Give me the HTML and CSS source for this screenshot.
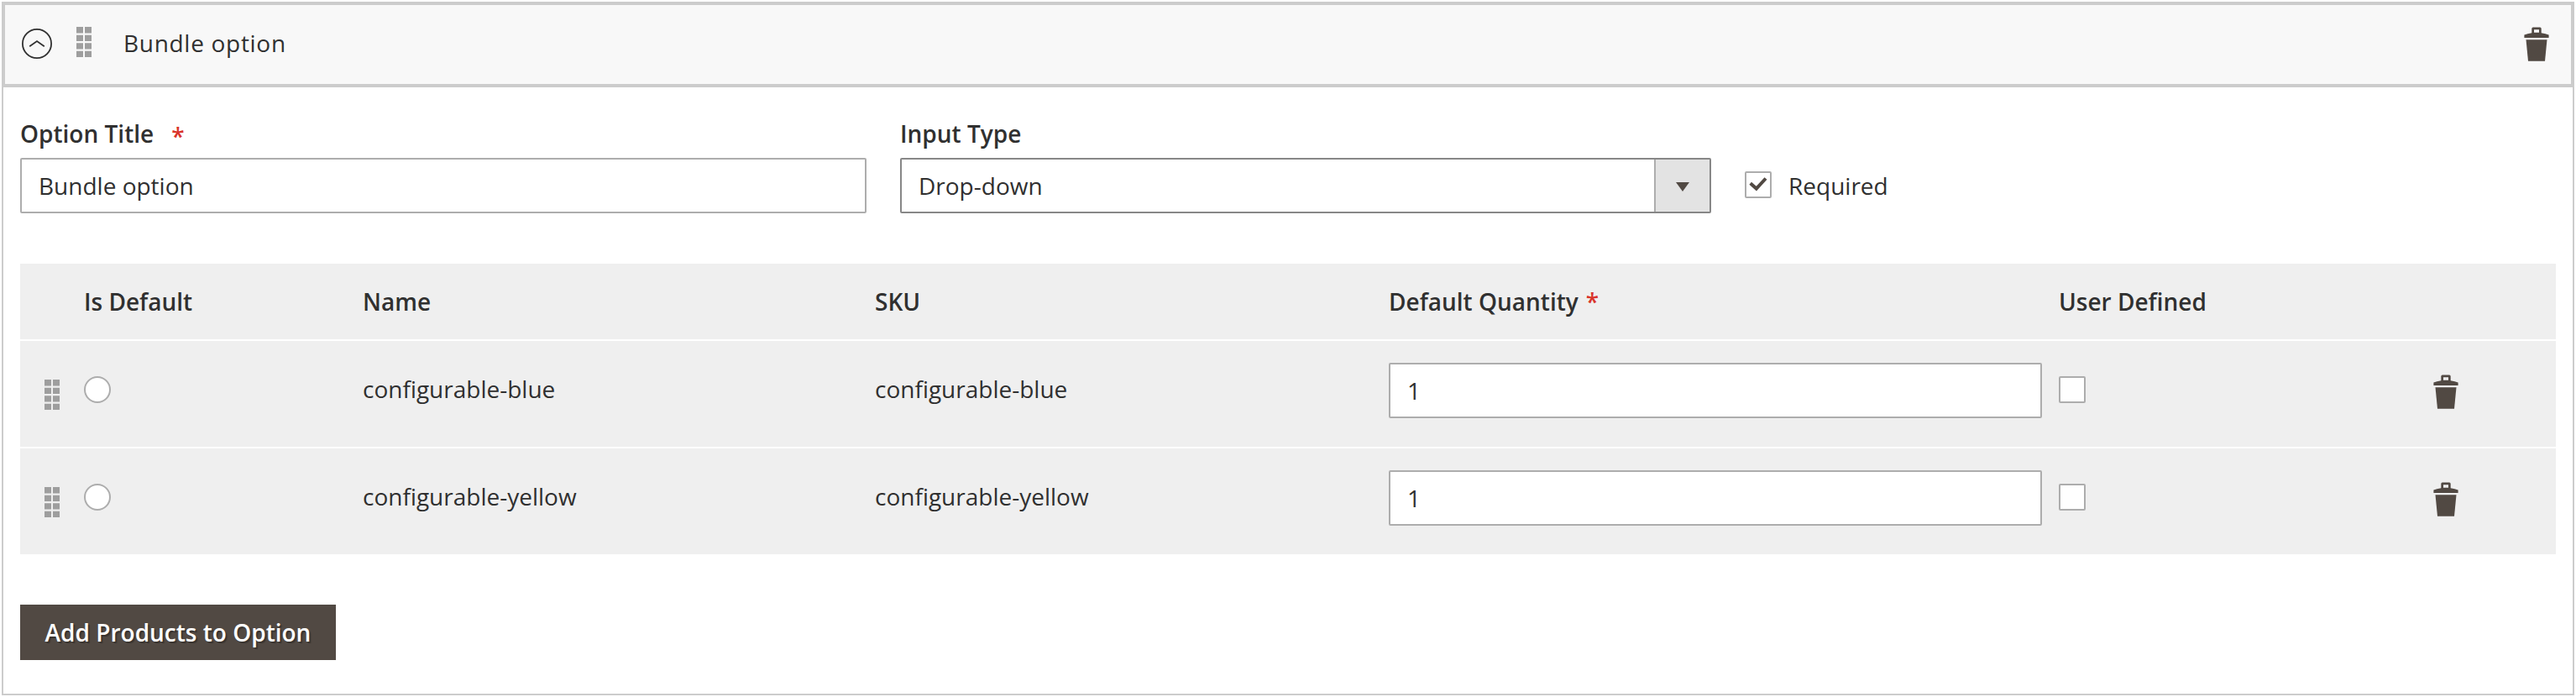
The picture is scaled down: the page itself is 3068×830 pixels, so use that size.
FILE: index.html
```html
<!DOCTYPE html>
<html lang="en">
<head>
<meta charset="utf-8">
<title>Bundle option</title>
<link rel="stylesheet" href="styles.css">
</head>
<body>
<svg class="sprite" aria-hidden="true">
  <symbol id="trash" viewBox="0 0 30 42">
    <path fill-rule="evenodd" d="M9.3 7.2V2.2Q9.300.6 10.900.6H19.100Q20.700.6 20.700 2.2V7.200Q26 8 29.600 9.400V13.100H.4V9.400Q4 8 9.300 7.200ZM12 3.300V6.800H18V3.300Z"/>
    <path d="M2.500 15.200H27.500L25 40.800H5Z"/>
  </symbol>
  <symbol id="grip" viewBox="0 0 18 37">
    <path d="M0 0h8v7.600h-8zM10 0h8v7.600h-8zM0 9.700h8v7.300h-8zM10 9.700h8v7.300h-8zM0 19.200h8v7.300h-8zM10 19.200h8v7.300h-8zM0 28.800h8v7.300h-8zM10 28.800h8v7.300h-8z"/>
  </symbol>
</svg>
<section class="panel">
  <header class="panel-head">
    <svg class="collapse" viewBox="0 0 36 36"><circle cx="18" cy="18" r="17.100"/><path d="M9.200 21.300L18 15L26.800 21.300"/></svg>
    <svg class="grip"><use href="#grip"/></svg>
    <span class="panel-title">Bundle option</span>
    <svg class="trash"><use href="#trash"/></svg>
  </header>
  <div class="panel-body">
    <div class="fields">
      <div class="field field-title">
        <label class="label">Option Title<span class="star">*</span></label>
        <div class="input">Bundle option</div>
      </div>
      <div class="field field-type">
        <label class="label">Input Type</label>
        <div class="select"><span class="select-value">Drop-down</span><span class="select-arrow"><svg class="caret" viewBox="0 0 16 11"><path d="M0 0H16L8 11Z"/></svg></span></div>
      </div>
      <div class="required">
        <span class="check"><svg class="tick" viewBox="0 0 28 28"><path d="M4.700 12.300L11.800 18.600L23 6.500"/></svg></span>
        <span>Required</span>
      </div>
    </div>
    <div class="table">
      <div class="row row-head">
        <span></span><span>Is Default</span><span>Name</span><span>SKU</span><span>Default Quantity<span class="star-head">*</span></span><span>User Defined</span><span></span>
      </div>
      <div class="row">
        <svg class="grip"><use href="#grip"/></svg>
        <span class="radio"></span>
        <span class="text">configurable-blue</span>
        <span class="text">configurable-blue</span>
        <div class="input qty">1</div>
        <span class="check"></span>
        <svg class="trash"><use href="#trash"/></svg>
      </div>
      <div class="row">
        <svg class="grip"><use href="#grip"/></svg>
        <span class="radio"></span>
        <span class="text">configurable-yellow</span>
        <span class="text">configurable-yellow</span>
        <div class="input qty">1</div>
        <span class="check"></span>
        <svg class="trash"><use href="#trash"/></svg>
      </div>
    </div>
    <button class="button" type="button">Add Products to Option</button>
  </div>
</section>
</body>
</html>
```
FILE: styles.css
```css
* { box-sizing: border-box; }
body {
  margin: 0;
  padding: 2px;
  background: #fff;
  color: #303030;
  font: 400 28px/40px "Open Sans", "Noto Sans", sans-serif;
}
svg { display: block; flex: none; }
.sprite { display: none; }
.panel {
  height: 826px;
  border: 2px solid #ccc;
  border-top: 0;
}
.panel-head {
  display: flex;
  align-items: flex-start;
  height: 102px;
  margin: 0 -2px;
  padding: 28px 26px 0 20px;
  border: 4px solid #ccc;
  background: #f8f8f8;
}
.collapse {
  width: 36px;
  height: 36px;
  fill: none;
  stroke: #303030;
  stroke-width: 1.8;
}
.grip { width: 18px; height: 37px; fill: #9e9e9e; }
.panel-head .grip { margin: -2px 38px 0 29px; }
.panel-title {
  margin-top: -3px;
  letter-spacing: .7px;
}
.trash { width: 30px; height: 42px; fill: #514943; }
.panel-head .trash { margin: -2px 0 0 auto; }
.panel-body { padding: 35px 20px 0; }
.fields { display: flex; }
.field-title { width: 1008px; margin-right: 40px; }
.field-type { width: 966px; margin-right: 40px; }
.label {
  display: flex;
  height: 49px;
  font-weight: 600;
}
.star { margin: 3px 0 0 21px; color: #d9342b; }
.star-head { margin-left: 9px; color: #d9342b; }
.input {
  height: 66px;
  padding: 11px 20px;
  border: 2px solid #adadad;
  border-radius: 2px;
  background: #fff;
}
.select {
  display: flex;
  height: 66px;
  border: 2px solid #878787;
  border-radius: 2px;
  background: #fff;
}
.select-value { flex: 1; padding: 11px 20px; }
.select-arrow {
  display: flex;
  align-items: center;
  justify-content: center;
  width: 66px;
  border-left: 2px solid #adadad;
  background: #e3e3e3;
}
.caret { width: 16px; height: 11px; margin-top: 3px; fill: #514943; }
.required {
  display: flex;
  gap: 20px;
  padding-top: 62px;
}
.check {
  width: 32px;
  height: 32px;
  border: 2px solid #adadad;
  border-radius: 2px;
  background: #fff;
}
.required .check { margin-top: 3px; }
.tick {
  width: 28px;
  height: 28px;
  fill: none;
  stroke: #514943;
  stroke-width: 4;
}
.table {
  display: grid;
  gap: 2px;
  margin-top: 60px;
}
.row {
  display: grid;
  grid-template-columns: 76px 332px 610px 612px 798px 426px 1fr;
  align-items: start;
  height: 126px;
  background: #efefef;
}
.row-head {
  height: 90px;
  padding-top: 25px;
  font-weight: 600;
}
.row .grip { margin: 46px 0 0 29px; }
.radio {
  width: 32px;
  height: 32px;
  margin-top: 42px;
  border: 2px solid #adadad;
  border-radius: 50%;
  background: #fff;
}
.text { margin-top: 37px; }
.qty { margin: 26px 20px 0 0; }
.row .check { margin-top: 42px; }
.row .trash { margin: 40px 0 0 20px; }
.button {
  display: block;
  width: 376px;
  height: 66px;
  margin-top: 60px;
  padding: 0 0 1px;
  border: 0;
  background: #514943;
  color: #fff;
  font: inherit;
  font-weight: 600;
  text-shadow: 2px 2px 1px rgba(0, 0, 0, .3);
}
```
